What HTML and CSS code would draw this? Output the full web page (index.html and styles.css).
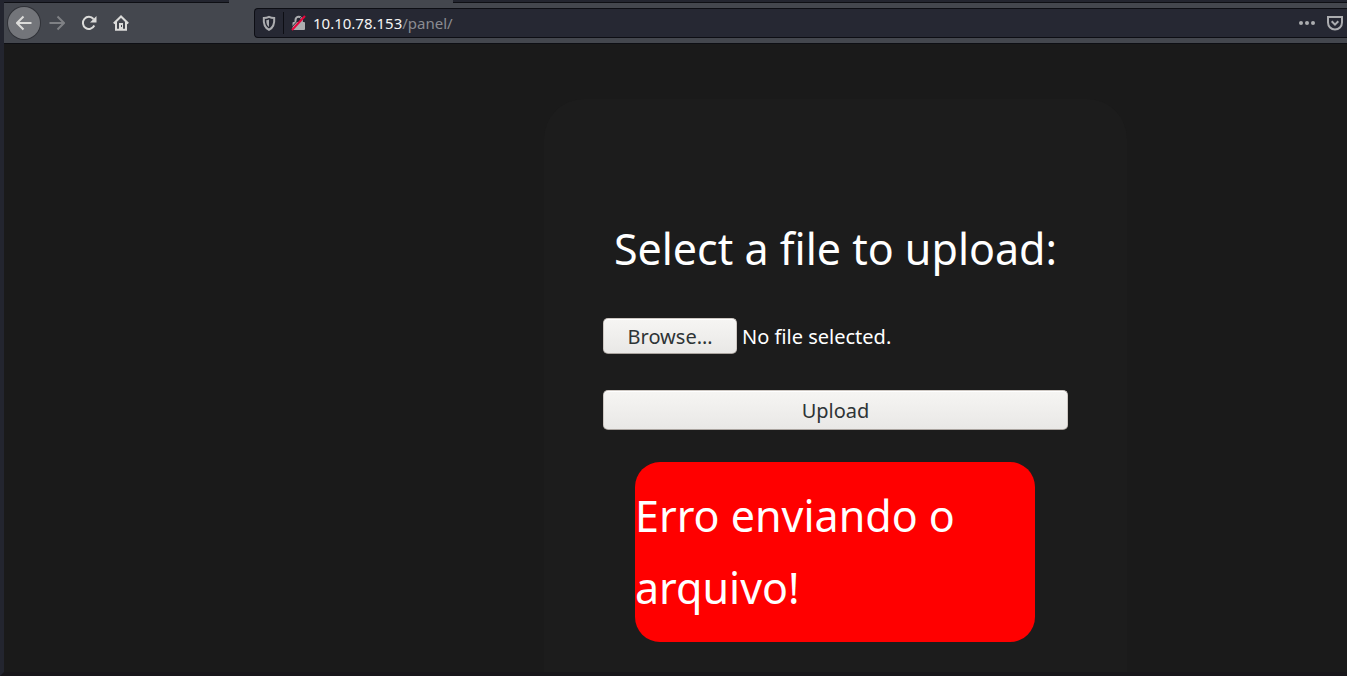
FILE: index.html
```html
<!DOCTYPE html>
<html lang="en">
<head>
<meta charset="utf-8">
<title>Panel</title>
<link rel="stylesheet" href="styles.css">
</head>
<body>
<div class="window">
  <header class="chrome">
    <div class="tabs"><div class="tab-before"></div><div class="tab-active"></div><div class="tab-after"></div></div>
    <nav class="toolbar" aria-label="Browser">
      <button class="tool back" type="button" aria-label="Back"><svg viewBox="0 0 16 16"><path d="M15.500 8H1M7.500 1.500L1 8l6.500 6.500"/></svg></button>
      <button class="tool forward" type="button" aria-label="Forward"><svg viewBox="0 0 16 16"><path d="M.5 8H15M8.500 1.500L15 8l-6.500 6.500"/></svg></button>
      <button class="tool" type="button" aria-label="Reload"><svg viewBox="0 0 16 16"><path d="M13.300 10.500A6 6 0 1 1 12.500 4"/><path class="solid" d="M15.500 1v6.500H9z"/></svg></button>
      <button class="tool" type="button" aria-label="Home"><svg viewBox="0 0 16 16"><path d="M.8 8.500L8 1.500l7.200 7M3 7v7.800h10V7"/><path class="solid" fill-rule="evenodd" d="M6 8h4v7H6zM8 10v2h1v-2z"/></svg></button>
      <div class="address">
        <button class="mark" type="button" aria-label="Tracking protection"><svg viewBox="0 0 16 16"><path d="M8 1.800C6 2.800 4 3 2.800 3c-.5 6 .8 9.700 5.200 11.800C12.400 12.700 13.700 9 13.200 3 12 3 10 2.800 8 1.800z"/><path class="solid" d="M8 4.500v7.500C5.800 10.500 5.300 8.500 5.300 5.300 6.500 5.200 7.300 5 8 4.500z"/></svg></button>
        <span class="divider"></span>
        <button class="mark" type="button" aria-label="Connection not secure"><svg viewBox="0 0 16 16"><path d="M4.500 8V5a3.200 3.200 0 0 1 6.400 0v3"/><rect class="solid" x="1.500" y="7" width="12.500" height="8" rx="1"/><path class="gap" d="M-.5 13.500L12 0"/><path class="slash" d="M1 15L14 1"/></svg></button>
        <div class="url" aria-label="Address"><span class="host">10.10.78.153</span>/panel/</div>
        <button class="mark more" type="button" aria-label="Page actions"><svg viewBox="0 0 18 16"><circle class="solid" cx="3" cy="8" r="2"/><circle class="solid" cx="9" cy="8" r="2"/><circle class="solid" cx="15" cy="8" r="2"/></svg></button>
        <button class="mark" type="button" aria-label="Save to Pocket"><svg viewBox="0 0 16 16"><path d="M1 2h14v5.500a7 7 0 0 1-14 0z"/><path d="M4.700 6.300L8 9.600l3.300-3.300"/></svg></button>
      </div>
    </nav>
  </header>
  <main class="page">
    <form class="card">
      <h1 class="title">Select a file to upload:</h1>
      <div class="picker">
        <input class="file" type="file" id="file">
        <label class="button browse" for="file">Browse…</label>
        <span class="status">No file selected.</span>
      </div>
      <button class="button upload" type="button">Upload</button>
      <p class="error" role="alert">Erro enviando o arquivo!</p>
    </form>
  </main>
</div>
</body>
</html>
```
FILE: styles.css
```css
* {
  box-sizing: border-box;
}

body {
  margin: 0;
  background: #1a1a1a;
  color: #fff;
  font-family: "Noto Sans", sans-serif;
}

.window {
  display: flex;
  flex-direction: column;
  min-height: 100vh;
  border-left: 4px solid #23252f;
  border-bottom: 4px solid #18161a;
}

.tabs {
  display: flex;
  height: 3px;
}

.tab-before,
.tab-after {
  background: #23252f;
  border-bottom: 1px solid #0e0f14;
}

.tab-before {
  width: 225px;
}

.tab-active {
  width: 224px;
  background: #44474e;
}

.tab-after {
  flex: 1;
}

.toolbar {
  display: flex;
  align-items: center;
  height: 41px;
  padding-left: 4px;
  background: #44474e;
  border-bottom: 1px solid #0e0f14;
}

button {
  border: 0;
  background: none;
  font: inherit;
}

.tool {
  display: flex;
  align-items: center;
  justify-content: center;
  width: 32px;
  height: 32px;
  padding: 0;
  color: #dcdcda;
}

.back {
  margin-right: 1px;
  border-radius: 50%;
  background: #73757a;
  box-shadow: 0 0 0 1px #303238;
}

.forward {
  color: #7f8185;
}

svg {
  display: block;
  width: 16px;
  height: 16px;
  fill: none;
  stroke: currentColor;
  stroke-width: 2;
}

.solid {
  fill: currentColor;
  stroke: none;
}

.gap {
  stroke: #262833;
  stroke-width: 1;
}

.slash {
  stroke: #e5063c;
}

.address {
  display: flex;
  align-items: center;
  flex: 1;
  height: 30px;
  margin-left: 117px;
  padding: 0 4px 0 6px;
  border: 1px solid #0d0e14;
  border-right: 0;
  border-radius: 4px 0 0 4px;
  background: #262833;
}

.mark {
  flex: none;
  padding: 0;
  color: #acadb0;
}

.divider {
  width: 1px;
  height: 22px;
  margin: 0 7px 0 6px;
  background: #0d0e14;
}

.url {
  flex: 1;
  margin-left: 6px;
  color: #8b8c91;
  font-size: 15px;
  line-height: 20px;
}

.host {
  color: #f5f5f5;
}

.more {
  margin-right: 11px;
}

.more svg {
  width: 18px;
}

.page {
  display: grid;
  grid-template-columns: 27fr minmax(0, 583px) 11fr;
  flex: 1;
  padding-top: 55px;
}

.card {
  grid-column: 2;
  padding: 114px 59px 30px;
  border-radius: 40px 40px 0 0;
  background: #1c1c1c;
}

.title,
.error {
  font-size: 43px;
  font-weight: 400;
  line-height: 72px;
}

.title {
  margin: 0 0 33px;
  text-align: center;
  white-space: nowrap;
}

.picker {
  position: relative;
  display: flex;
  align-items: center;
  gap: 5px;
  margin-bottom: 36px;
  font-size: 20px;
}

.file {
  position: absolute;
  width: 134px;
  height: 36px;
  opacity: 0;
}

.button {
  display: flex;
  align-items: center;
  justify-content: center;
  border: 1px solid #cdc7c2;
  border-bottom-color: #aaa49f;
  border-radius: 5px;
  background: linear-gradient(#f6f5f3, #e9e8e6);
  box-shadow: inset 0 1px #fff;
  color: #2e3436;
  font-size: 20px;
}

.browse {
  width: 134px;
  height: 36px;
}

.upload {
  width: 100%;
  height: 40px;
}

.error {
  margin: 32px 33px 0 32px;
  padding: 18px 0;
  border-radius: 25px;
  background: #f00;
}
```
